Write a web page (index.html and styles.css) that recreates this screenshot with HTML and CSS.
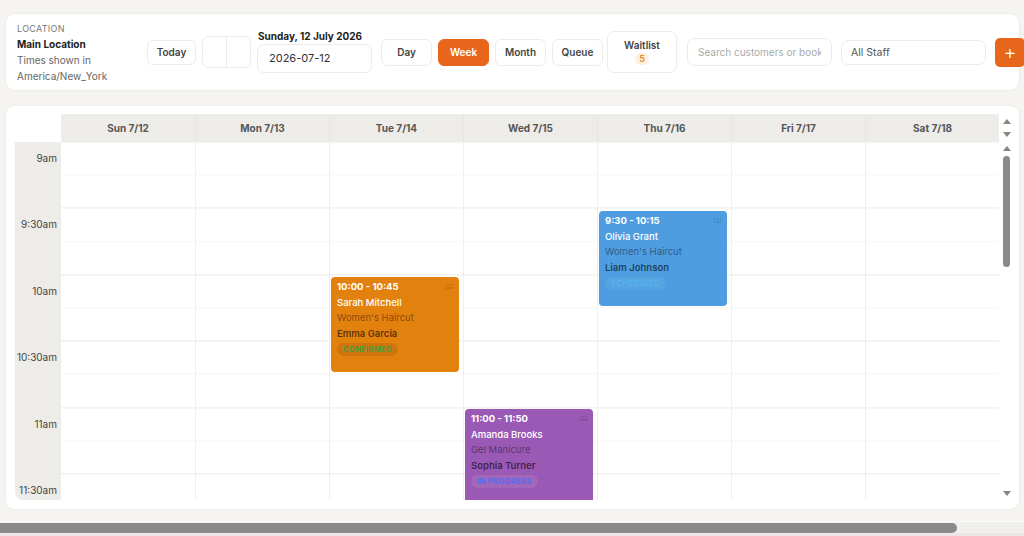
FILE: index.html
```html
<!DOCTYPE html>
<html lang="en">
<head>
<meta charset="utf-8">
<title>Calendar</title>
<link rel="stylesheet" href="styles.css">
</head>
<body>
<div class="app">
  <header class="card toolbar">
    <div class="loc">
      <div class="loc-label">LOCATION</div>
      <div class="loc-name">Main Location</div>
      <div class="loc-tz">Times shown in<br>America/New_York</div>
    </div>
    <button class="btn today">Today</button>
    <div class="navgroup"><button class="nav-half"></button><button class="nav-half"></button></div>
    <div class="datebox">
      <div class="date-title">Sunday, 12 July 2026</div>
      <div class="date-input">2026-07-12</div>
    </div>
    <div class="views">
      <button class="btn view">Day</button>
      <button class="btn view active">Week</button>
      <button class="btn view">Month</button>
      <button class="btn view">Queue</button>
    </div>
    <button class="btn waitlist"><span>Waitlist</span><span class="wl-badge">5</span></button>
    <input class="search" type="text" placeholder="Search customers or bookings">
    <div class="staff">All Staff</div>
    <button class="add">+</button>
  </header>

  <section class="card calendar">
    <div class="cal-head">
      <div class="head-grid">
        <div class="corner"></div>
        <div class="day-h">Sun 7/12</div>
        <div class="day-h">Mon 7/13</div>
        <div class="day-h">Tue 7/14</div>
        <div class="day-h">Wed 7/15</div>
        <div class="day-h">Thu 7/16</div>
        <div class="day-h">Fri 7/17</div>
        <div class="day-h">Sat 7/18</div>
      </div>
      <div class="rail rail-head">
        <span class="arr-box"><span class="arr up"></span></span>
        <span class="arr-box"><span class="arr down"></span></span>
      </div>
    </div>
    <div class="cal-body">
      <div class="body-grid">
        <div class="times">
          <div class="t">9am</div><div class="t">9:30am</div>
          <div class="t">10am</div><div class="t">10:30am</div>
          <div class="t">11am</div><div class="t">11:30am</div>
        </div>
        <div class="col"></div>
        <div class="col"></div>
        <div class="col">
          <div class="event orange" style="top:135px;height:95px">
            <span class="grip"><svg width="9" height="6" viewBox="0 0 9 6"><circle cx="1.5" cy="1" r="0.8"/><circle cx="4.5" cy="1" r="0.8"/><circle cx="7.5" cy="1" r="0.8"/><rect x="0.5" y="3.6" width="8" height="0.9"/></svg></span>
            <div class="ev-time">10:00 - 10:45</div>
            <div class="ev-client">Sarah Mitchell</div>
            <div class="ev-service">Women's Haircut</div>
            <div class="ev-staff">Emma Garcia</div>
            <span class="ev-status confirmed">CONFIRMED</span>
          </div>
        </div>
        <div class="col">
          <div class="event purple" style="top:267px;height:131px">
            <span class="grip"><svg width="9" height="6" viewBox="0 0 9 6"><circle cx="1.5" cy="1" r="0.8"/><circle cx="4.5" cy="1" r="0.8"/><circle cx="7.5" cy="1" r="0.8"/><rect x="0.5" y="3.6" width="8" height="0.9"/></svg></span>
            <div class="ev-time">11:00 - 11:50</div>
            <div class="ev-client">Amanda Brooks</div>
            <div class="ev-service">Gel Manicure</div>
            <div class="ev-staff">Sophia Turner</div>
            <span class="ev-status progress">IN PROGRESS</span>
          </div>
        </div>
        <div class="col">
          <div class="event blue" style="top:69px;height:95px">
            <span class="grip"><svg width="9" height="6" viewBox="0 0 9 6"><circle cx="1.5" cy="1" r="0.8"/><circle cx="4.5" cy="1" r="0.8"/><circle cx="7.5" cy="1" r="0.8"/><rect x="0.5" y="3.6" width="8" height="0.9"/></svg></span>
            <div class="ev-time">9:30 - 10:15</div>
            <div class="ev-client">Olivia Grant</div>
            <div class="ev-service">Women's Haircut</div>
            <div class="ev-staff">Liam Johnson</div>
            <span class="ev-status scheduled">SCHEDULED</span>
          </div>
        </div>
        <div class="col"></div>
        <div class="col"></div>
      </div>
      <div class="rail rail-body">
        <span class="arr-box"><span class="arr up"></span></span>
        <span class="rail-track"><span class="rail-thumb"></span></span>
        <span class="arr-box"><span class="arr down"></span></span>
      </div>
    </div>
  </section>
</div>
<div class="hscroll"><div class="hthumb"></div></div>
</body>
</html>
```

FILE: styles.css
```css
* { box-sizing: border-box; }

html, body {
  margin: 0;
  background: #f5f4f1;
  font-family: "Inter", "Noto Sans", "Liberation Sans", sans-serif;
  color: #333;
  overflow: hidden;
}

body {
  height: 536px;
  display: flex;
  flex-direction: column;
}

.app {
  flex: 1;
  padding: 13px 4px 0 5px;
  display: flex;
  flex-direction: column;
  gap: 14px;
}

.card {
  background: #fff;
  border: 1px solid #efede9;
  border-radius: 10px;
}

/* ---------- toolbar ---------- */
.toolbar {
  height: 78px;
  display: flex;
  align-items: center;
  padding: 0 0 0 11px;
}

.loc {
  width: 130px;
  flex: none;
  margin-top: 1px;
}
.loc-label {
  font-size: 9px;
  letter-spacing: 0.3px;
  color: #777;
  line-height: 14px;
}
.loc-name {
  font-size: 10px;
  font-weight: 700;
  color: #222;
  line-height: 16px;
}
.loc-tz {
  font-size: 10px;
  color: #666;
  line-height: 16px;
}

button {
  font-family: inherit;
  cursor: pointer;
}

.btn {
  flex: none;
  background: #fff;
  border: 1px solid #eeece8;
  border-radius: 6px;
  font-size: 10px;
  font-weight: 600;
  color: #444;
  padding: 0;
}

.today {
  width: 49px;
  height: 25px;
}

.navgroup {
  flex: none;
  margin-left: 6px;
  width: 49px;
  height: 32px;
  display: flex;
  border: 1px solid #eeece8;
  border-radius: 7px;
  overflow: hidden;
}
.nav-half {
  flex: 1;
  background: #fff;
  border: none;
  padding: 0;
}
.nav-half + .nav-half {
  border-left: 1px solid #eeece8;
}

.datebox {
  flex: none;
  margin-left: 6px;
  width: 115px;
  display: flex;
  flex-direction: column;
  margin-top: -2px;
}
.date-title {
  font-size: 10px;
  font-weight: 700;
  color: #222;
  line-height: 13px;
  padding-left: 1px;
}
.date-input {
  margin-top: 1px;
  height: 29px;
  border: 1px solid #eeece8;
  border-radius: 7px;
  font-size: 11px;
  color: #333;
  line-height: 27px;
  padding-left: 11px;
}

.views {
  flex: none;
  display: flex;
  gap: 6px;
  margin-left: 9px;
}
.view {
  width: 51px;
  height: 27px;
}
.view.active {
  background: #e8661c;
  border-color: #e8661c;
  color: #fff;
}

.waitlist {
  margin-left: 4px;
  width: 70px;
  height: 42px;
  border-radius: 7px;
  display: flex;
  flex-direction: column;
  align-items: center;
  justify-content: center;
  gap: 2px;
}
.wl-badge {
  background: #fdf0dc;
  color: #e08a2c;
  font-size: 9px;
  font-weight: 600;
  border-radius: 7px;
  width: 14px;
  height: 12px;
  line-height: 12px;
  text-align: center;
}

.search {
  flex: none;
  margin-left: 10px;
  width: 145px;
  height: 28px;
  border: 1px solid #eeece8;
  border-radius: 7px;
  font-family: inherit;
  font-size: 10px;
  padding: 0 10px;
  color: #333;
  outline: none;
}
.search::placeholder {
  color: #aaa;
}

.staff {
  flex: none;
  margin-left: 9px;
  width: 145px;
  height: 25px;
  border: 1px solid #eeece8;
  border-radius: 7px;
  font-size: 10.5px;
  color: #555;
  line-height: 23px;
  padding-left: 9px;
}

.add {
  flex: none;
  margin-left: 9px;
  width: 30px;
  height: 29px;
  background: #e8661c;
  border: none;
  border-radius: 5px;
  color: #fff;
  font-size: 20px;
  font-weight: 300;
  line-height: 29px;
  padding: 0;
}

/* ---------- calendar ---------- */
.calendar {
  height: 405px;
  padding: 8px 5px 9px 9px;
  display: flex;
  flex-direction: column;
}

.cal-head {
  flex: none;
  height: 28px;
  display: flex;
}
.head-grid {
  flex: 1;
  display: grid;
  grid-template-columns: 46px repeat(7, 1fr);
}
.corner {
  background: #fff;
}
.day-h {
  background: #eeece8;
  font-size: 10px;
  font-weight: 700;
  color: #555;
  text-align: center;
  line-height: 28px;
}
.day-h + .day-h {
  border-left: 1px solid #e9e7e3;
}

.cal-body {
  flex: 1;
  min-height: 0;
  display: flex;
}
.body-grid {
  flex: 1;
  overflow: hidden;
  display: grid;
  grid-template-columns: 46px repeat(7, 1fr);
  align-items: start;
  border-bottom-left-radius: 8px;
}

.times {
  background: #eeece8;
  height: 100%;
}
.t {
  height: 66.4px;
  line-height: 33.2px;
  text-align: right;
  padding-right: 4px;
  font-size: 10px;
  color: #444;
}

.col {
  position: relative;
  height: 100%;
  min-height: 398.4px;
  border-left: 1px solid #f0efed;
  background-image:
    repeating-linear-gradient(to bottom, #ececea 0, #ececea 1px, transparent 1px, transparent 66.4px),
    repeating-linear-gradient(to bottom, #f7f7f6 0, #f7f7f6 1px, transparent 1px, transparent 33.2px);
  background-position: 0 -0.6px, 0 -0.6px;
}
.times + .col {
  border-left: none;
}

/* scroll rails */
.rail {
  flex: none;
  width: 15px;
  display: flex;
  flex-direction: column;
  align-items: center;
  background: #fff;
}
.rail-head {
  padding-top: 1px;
}
.arr-box {
  height: 13px;
  width: 15px;
  display: flex;
  align-items: center;
  justify-content: center;
}
.arr {
  width: 0;
  height: 0;
  border-left: 4px solid transparent;
  border-right: 4px solid transparent;
}
.arr.up {
  border-bottom: 5px solid #858585;
}
.arr.down {
  border-top: 5px solid #858585;
}
.rail-track {
  flex: 1;
  display: flex;
  justify-content: center;
  padding-top: 1px;
}
.rail-thumb {
  width: 7px;
  height: 111px;
  border-radius: 4px;
  background: #8a8a8a;
}

/* page horizontal scrollbar */
.hscroll {
  flex: none;
  height: 15px;
  background: #f1f0ef;
  border-top: 1px solid #fbfbfa;
  border-bottom: 3px solid #ede6e6;
  padding-top: 1px;
}
.hthumb {
  width: 957px;
  height: 10px;
  border-radius: 0 5px 5px 0;
  background: #8a8a8a;
}

.event {
  position: absolute;
  left: 1px;
  right: 4px;
  border-radius: 4px;
  padding: 2px 6px 0 6px;
  font-size: 9.5px;
  line-height: 15.6px;
  overflow: hidden;
}
.event.orange { background: #e3810f; }
.event.blue { background: #4d9de0; }
.event.purple { background: #9b59b6; }

.grip {
  position: absolute;
  right: 5px;
  top: 7px;
  display: block;
  line-height: 0;
}
.grip svg { fill: rgba(0, 0, 0, 0.22); }

.ev-time {
  font-weight: 700;
  color: #fff;
}
.ev-client {
  color: #fff;
  font-weight: 500;
}
.ev-service {
  color: rgba(0, 0, 0, 0.45);
}
.ev-staff {
  color: rgba(0, 0, 0, 0.62);
  font-weight: 600;
}
.ev-status {
  display: inline-block;
  margin-top: 1px;
  padding: 0 6px;
  border-radius: 7px;
  font-size: 7.5px;
  font-weight: 700;
  letter-spacing: 0.4px;
  line-height: 13px;
}
.ev-status.confirmed {
  background: rgba(0, 0, 0, 0.09);
  color: #4f9a3c;
}
.ev-status.scheduled {
  background: rgba(255, 255, 255, 0.06);
  color: #55b3ef;
}
.ev-status.progress {
  background: rgba(255, 255, 255, 0.08);
  color: #4f6df2;
}
```
